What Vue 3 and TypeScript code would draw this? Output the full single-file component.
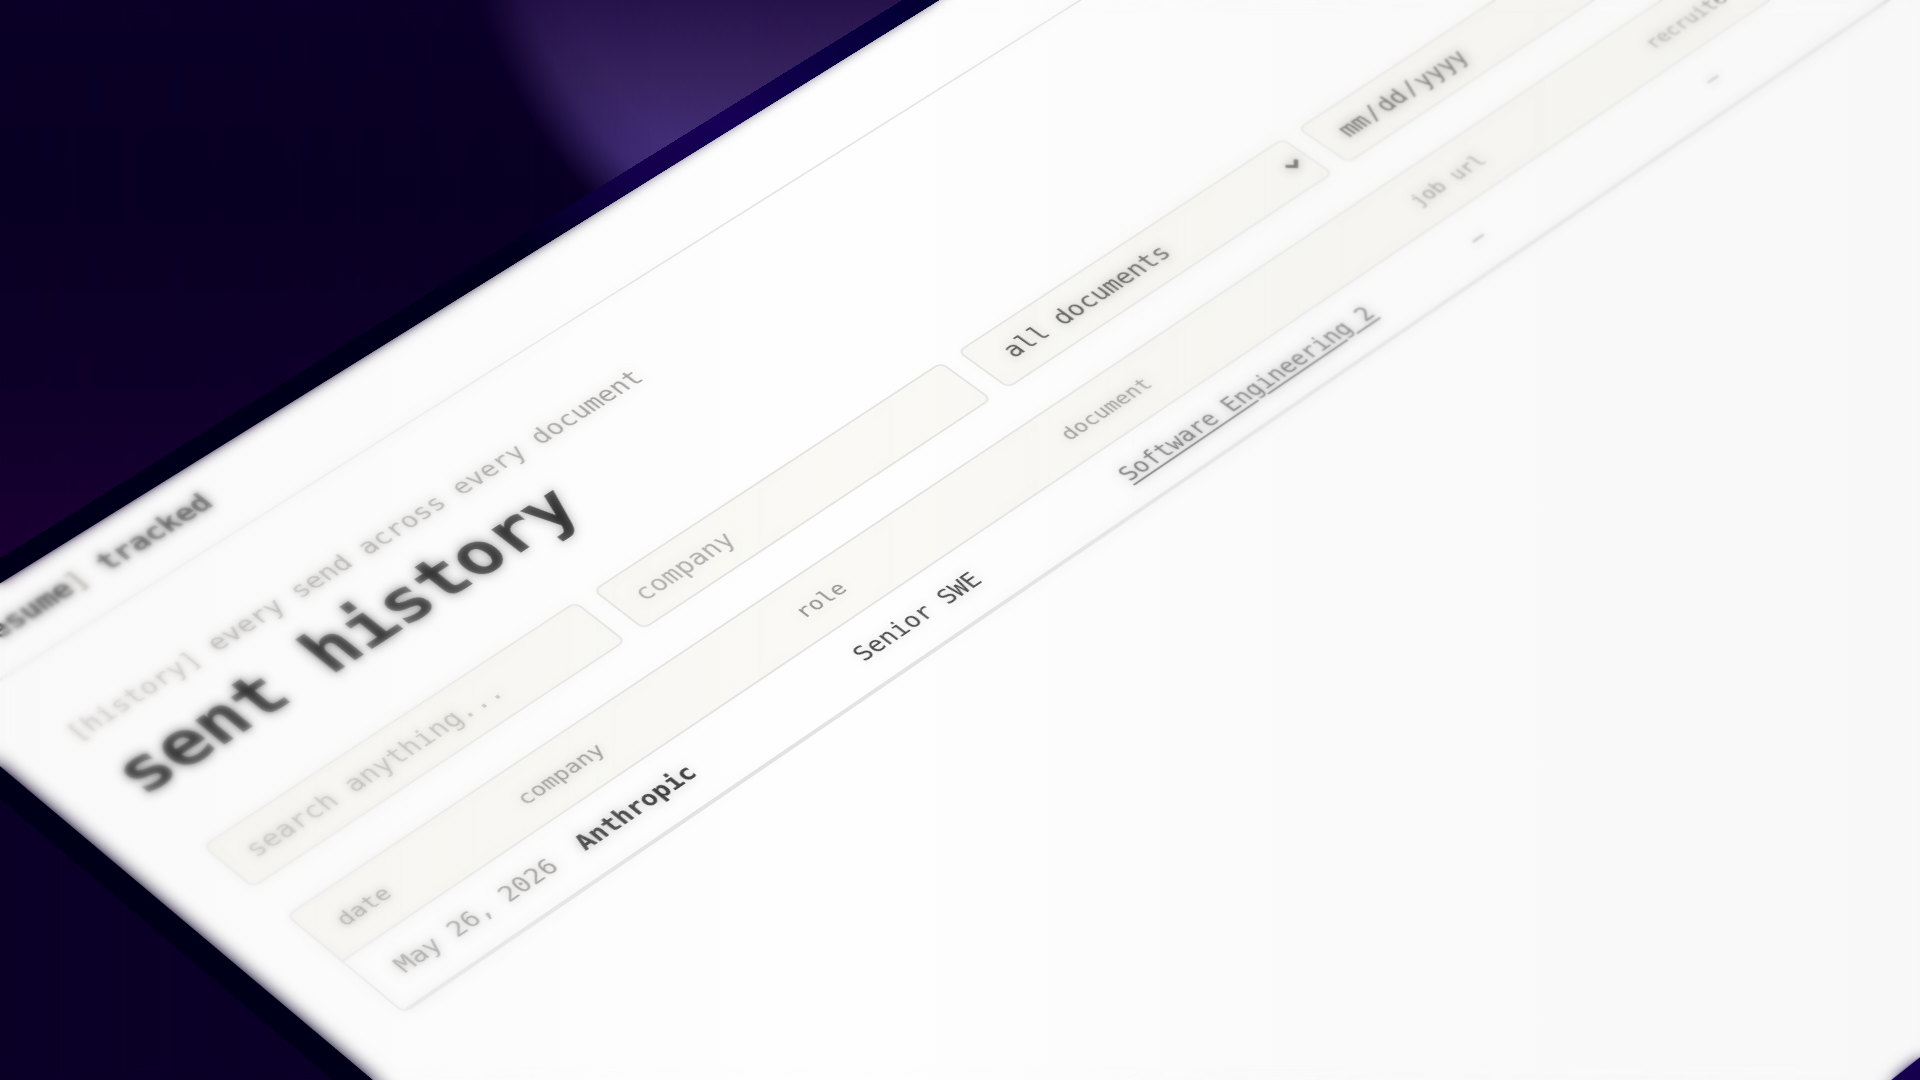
<script setup lang="ts">
import { ref } from 'vue'

interface Point { x: number; y: number }
interface Send {
  date: string
  company: string
  role: string
  document: string
  jobUrl: string
  recruiter: string
}

const sends: Send[] = [
  {
    date: 'May 26, 2026',
    company: 'Anthropic',
    role: 'Senior SWE',
    document: 'Software_Engineering_2',
    jobUrl: '–',
    recruiter: '–',
  },
]

const query = ref('')
const company = ref('')
const documentFilter = ref('all')
const sentOn = ref('')

// Camera: the sheet's top-left corner and the vanishing points of its rows and columns.
const origin: Point = { x: -125, y: 661 }
const rowVanish: Point = { x: 11600, y: -6620 }
const colVanish: Point = { x: -9400, y: -7147 }
const depth = 0.00007805

const sheetMatrix = `matrix3d(${[
  depth * rowVanish.x, depth * rowVanish.y, 0, depth,
  -depth * colVanish.x, -depth * colVanish.y, 0, -depth,
  0, 0, 1, 0,
  origin.x, origin.y, 0, 1,
].join(',')})`
</script>

<template>
  <div class="scene">
    <div class="glow"></div>
    <div class="glow-corner"></div>

    <div class="sheet" :style="{ transform: sheetMatrix }">
      <header class="topbar">
        <a class="brand" href="#"><span class="bracket">[</span>resume<span class="bracket">]</span> tracked</a>
      </header>
      <main class="content">
        <p class="eyebrow"><span class="tag">[history]</span> every send across every document</p>
        <h1 class="title">sent history</h1>

        <form class="filters" @submit.prevent>
          <input v-model="query" class="field" type="text" placeholder="search anything..." aria-label="search anything" />
          <input v-model="company" class="field" type="text" placeholder="company" aria-label="company" />
          <div class="select-wrap">
            <select v-model="documentFilter" class="field select" aria-label="document">
              <option value="all">all documents</option>
            </select>
            <svg class="chevron" viewBox="0 0 18 12" aria-hidden="true">
              <path d="M2 2 L9 9 L16 2" fill="none" stroke="#333" stroke-width="4" />
            </svg>
          </div>
          <input v-model="sentOn" class="field" type="date" aria-label="sent on" />
        </form>

        <div class="card">
          <table class="history">
            <colgroup>
              <col class="c-date" />
              <col class="c-company" />
              <col class="c-role" />
              <col class="c-document" />
              <col class="c-url" />
              <col />
            </colgroup>
            <thead>
              <tr>
                <th scope="col">date</th>
                <th scope="col">company</th>
                <th scope="col">role</th>
                <th scope="col">document</th>
                <th scope="col">job url</th>
                <th scope="col">recruiter</th>
              </tr>
            </thead>
            <tbody>
              <tr v-for="send in sends" :key="send.document">
                <td class="muted">{{ send.date }}</td>
                <td class="strong">{{ send.company }}</td>
                <td>{{ send.role }}</td>
                <td><a class="doc" href="#">{{ send.document }}</a></td>
                <td class="muted">{{ send.jobUrl }}</td>
                <td class="muted">{{ send.recruiter }}</td>
              </tr>
            </tbody>
          </table>
        </div>
      </main>
    </div>

    <div class="focus focus-far-left"></div>
    <div class="focus focus-left"></div>
    <div class="focus focus-right"></div>
    <div class="focus focus-far-right"></div>
    <div class="light"></div>
    <div class="rim" :style="{ transform: sheetMatrix }"></div>
  </div>
</template>

<style>
body {
  margin: 0;
  background: #0c0028;
}
</style>

<style scoped>
.scene {
  position: relative;
  width: 100%;
  height: 100vh;
  overflow: hidden;
  background: linear-gradient(180deg, #0c0028 0, #0a0024 200px, #10002a 400px, #1a0034 540px, #0c0028 760px);
  font-family: "DejaVu Sans Mono", "Liberation Mono", monospace;
}

.glow,
.glow-corner {
  position: absolute;
  inset: 0;
}

.glow {
  background: linear-gradient(180deg, #28144c 0, #38245f 80px, #44307c 160px);
  mask-image: radial-gradient(circle at 944px -142px, #000 400px, rgba(0, 0, 0, 0.85) 440px, transparent 490px);
}

.glow-corner {
  background: radial-gradient(circle at 100% 100%, #2c1460 0, #200a50 200px, transparent 400px);
}

.rim,
.sheet {
  position: absolute;
  top: 0;
  left: 0;
  width: 2331px;
  min-height: 1505px;
  transform-origin: 0 0;
}

.rim {
  pointer-events: none;
}

.rim::before {
  content: "";
  position: absolute;
  inset: -24px;
  border: 24px solid;
  border-image: linear-gradient(90deg, #000018 0, #00001c 780px, #13004a 920px, #170055 1030px, #080040 1200px, #00002a 1350px) 24;
}

.sheet {
  background: #fefefe;
  box-shadow: inset 6px 0 12px -2px rgba(20, 15, 45, 0.6);
  color: #2c2c2c;
}

.topbar {
  box-sizing: border-box;
  display: flex;
  align-items: center;
  height: 92px;
  padding: 0 58px 6px;
  border-bottom: 2px solid #e2e2e2;
}

.brand {
  color: #2c2c2c;
  font-size: 30px;
  font-weight: 700;
  letter-spacing: -0.02em;
  text-decoration: none;
  white-space: pre;
}

.bracket {
  color: #a09c94;
}

.content {
  padding: 72px 66px;
}

.eyebrow {
  margin: 0;
  color: #8a8884;
  font-size: 26px;
  line-height: 40px;
}

.tag {
  color: #a8a49c;
}

.title {
  margin: 12px 0 62px;
  color: #222;
  font-size: 72px;
  font-weight: 700;
  letter-spacing: -0.02em;
  line-height: 80px;
}

.filters {
  display: grid;
  grid-template-columns: repeat(5, 1fr);
  gap: 20px;
  margin-bottom: 42px;
}

.field {
  box-sizing: border-box;
  width: 100%;
  height: 66px;
  padding: 0 22px;
  border: 2px solid #e0e0de;
  border-radius: 8px;
  background: #faf9f5;
  color: #333;
  font-family: inherit;
  font-size: 26px;
  outline: none;
}

.field::placeholder {
  color: #a4a4a4;
  opacity: 1;
}

.field::-webkit-datetime-edit-month-field,
.field::-webkit-datetime-edit-day-field,
.field::-webkit-datetime-edit-year-field {
  padding: 0 2px;
}

.select-wrap {
  position: relative;
}

.select {
  appearance: none;
  padding: 0 30px;
}

.chevron {
  position: absolute;
  top: 27px;
  right: 10px;
  width: 18px;
  height: 12px;
}

.card {
  overflow: hidden;
  border: 2px solid #e0e0e0;
  border-radius: 8px;
}

.history {
  width: 100%;
  border-spacing: 0;
  table-layout: fixed;
}

.c-date { width: 202px; }
.c-company { width: 325px; }
.c-role { width: 326px; }
.c-document { width: 454px; }
.c-url { width: 324px; }

.history th,
.history td {
  box-sizing: border-box;
  padding: 0 0 0 28px;
  border-bottom: 2px solid #e0e0e0;
  text-align: left;
  white-space: nowrap;
}

.history th {
  height: 70px;
  padding-left: 26px;
  background: #faf9f5;
  color: #848280;
  font-size: 22px;
  font-weight: 400;
}

.history td {
  height: 76px;
  color: #2c2c2c;
  font-size: 24px;
}

.history td.muted {
  color: #848280;
}

.history td.strong {
  color: #222;
  font-weight: 700;
}

.doc {
  color: #4c4c4c;
  text-underline-offset: 4px;
}

.focus,
.light {
  position: absolute;
  inset: 0;
  pointer-events: none;
}

.focus-far-left {
  backdrop-filter: blur(2px);
  mask-image: linear-gradient(90deg, #000 0, rgba(0, 0, 0, 0.6) 300px, transparent 650px);
}

.focus-left {
  backdrop-filter: blur(6px);
  mask-image: linear-gradient(90deg, rgba(0, 0, 0, 0.6) 0, rgba(0, 0, 0, 0.45) 450px, rgba(0, 0, 0, 0.15) 750px, transparent 950px);
}

.focus-right {
  backdrop-filter: blur(6px);
  mask-image: linear-gradient(90deg, transparent 750px, rgba(0, 0, 0, 0.45) 1200px, rgba(0, 0, 0, 0.7) 1900px);
}

.focus-far-right {
  backdrop-filter: blur(1px);
  mask-image: linear-gradient(90deg, transparent 950px, #000 1500px);
}

.light {
  background: linear-gradient(90deg, #fafafa 0, #fcfcfc 350px, #fff 850px, #fbfbfb 1300px, #f9f9f9 1920px);
  mix-blend-mode: multiply;
}
</style>
